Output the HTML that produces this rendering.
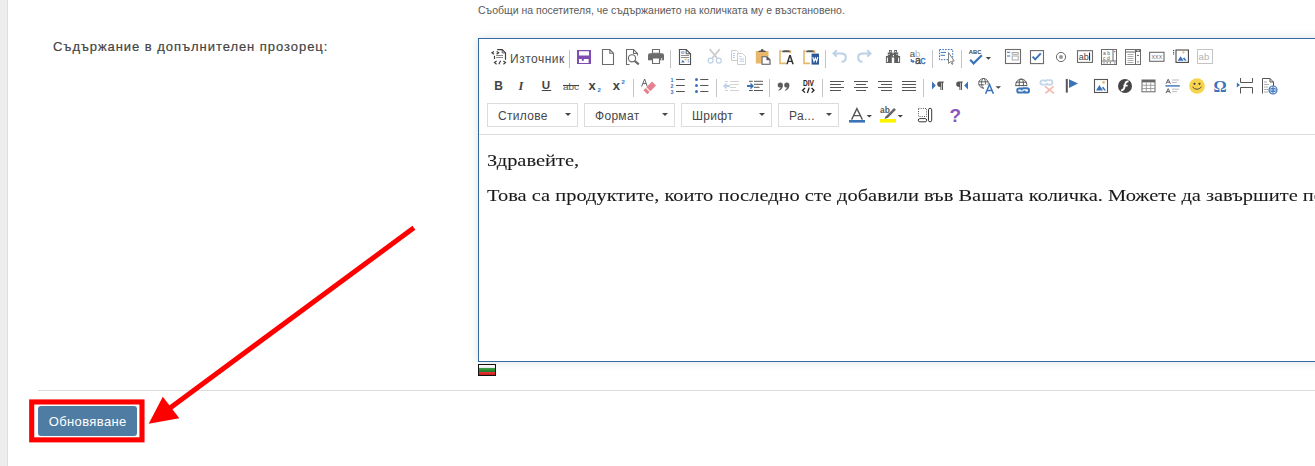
<!DOCTYPE html>
<html><head><meta charset="utf-8">
<style>
html,body{margin:0;padding:0}
body{width:1315px;height:466px;overflow:hidden;position:relative;background:#fff;font-family:"Liberation Sans",sans-serif}
.lbar{position:absolute;left:0;top:0;width:7px;height:466px;background:#ededed;border-right:1px solid #dedede}
.lbl{position:absolute;left:53px;top:39px;font-size:13px;font-weight:normal;color:#444;-webkit-text-stroke:0.2px #444;letter-spacing:0.95px;white-space:nowrap}
.desc{position:absolute;left:478px;top:4px;font-size:10.5px;color:#5a5a5a;white-space:nowrap}
.ed{position:absolute;left:478px;top:38px;width:900px;height:322px;border:1px solid #336b9e;box-shadow:0 0 9px rgba(20,40,70,0.15);background:#fff}
.ic{position:absolute;overflow:visible}
.sep{position:absolute;width:1px;background:#c4c4c4}
.srclbl{position:absolute;left:510px;top:52px;font-size:12px;color:#4a4a4a;white-space:nowrap;letter-spacing:0.5px}
.combo{position:absolute;top:103px;height:22px;border:1px solid #dcdcdc;background:#fff}
.combo span{position:absolute;left:10px;top:5px;font-size:12px;color:#474747;white-space:nowrap;letter-spacing:0.3px}
.combo i{position:absolute;right:6px;top:9px;width:0;height:0;border-left:3px solid transparent;border-right:3px solid transparent;border-top:3px solid #474747}
.tbline{position:absolute;left:479px;top:134px;width:836px;height:1px;background:#dedede}
.content{position:absolute;left:487px;top:150px;transform:scaleX(1.168);transform-origin:0 0;font-family:"Liberation Serif",serif;font-size:17.5px;color:#1a1a1a;white-space:nowrap;-webkit-text-stroke:0.08px #222}
.content p{margin:0;position:absolute;left:0}
.flag{position:absolute;left:478px;top:364px;width:16px;height:10px;border:1px solid #111;background:linear-gradient(#fff 0,#e6e6e6 33%,#3aa043 33%,#217a2a 66%,#f03a3a 66%,#c81c1c 100%)}
.hr{position:absolute;left:38px;top:390px;width:1277px;height:1px;background:#dcdcdc}
.btn{position:absolute;left:38px;top:406px;width:99px;height:30px;background:#4f7ca3;border-radius:3px;color:#fff;font-size:13px;text-align:center;line-height:32px;letter-spacing:0.38px;text-indent:0.4px}
.redbox{position:absolute;left:29px;top:399px;width:105px;height:33px;border:5px solid #f00}
</style></head><body>
<div class="lbar"></div>
<div class="lbl">Съдържание в допълнителен прозорец:</div>
<div class="desc">Съобщи на посетителя, че съдържанието на количката му е възстановено.</div>
<div class="ed"></div>
<div class="srclbl">Източник</div>
<div class="sep" style="left:569px;top:50px;height:18px"></div>
<div class="sep" style="left:670px;top:50px;height:18px"></div>
<div class="sep" style="left:825px;top:50px;height:18px"></div>
<div class="sep" style="left:932px;top:50px;height:18px"></div>
<div class="sep" style="left:961px;top:50px;height:18px"></div>
<div class="sep" style="left:633px;top:79px;height:18px"></div>
<div class="sep" style="left:716px;top:79px;height:18px"></div>
<div class="sep" style="left:769px;top:79px;height:18px"></div>
<div class="sep" style="left:822px;top:79px;height:18px"></div>
<div class="sep" style="left:923px;top:79px;height:18px"></div>
<div class="combo" style="left:487px;width:89px"><span>Стилове</span><i></i></div>
<div class="combo" style="left:584px;width:89px"><span>Формат</span><i></i></div>
<div class="combo" style="left:681px;width:89px"><span>Шрифт</span><i></i></div>
<div class="combo" style="left:778px;width:59px"><span>Ра...</span><i></i></div>
<div class="tbline"></div>
<svg class="ic" style="left:491px;top:49px;width:16px;height:16px" viewBox="0 0 16 16"><g fill="none" stroke="#3c3c3c" stroke-width="1.15">
<path d="M3 2.4 L0.9 3.8 L3 5.2"/><path d="M5.6 2.4 L7.7 3.8 L5.6 5.2"/>
<path d="M6.2 0.6 H11.2 L14.5 3.9 V10.8"/><path d="M11.2 0.6 V3.9 H14.5" stroke-width="0.8"/>
<path d="M3.5 6.8 V10"/>
<path d="M5.2 6.5 H12 M5.2 8.5 H12" stroke="#8a8a8a"/>
<path d="M5.6 12 L3.5 13.6 L5.6 15.2"/><path d="M12.4 12 L14.5 13.6 L12.4 15.2"/><path d="M9.6 11.8 L7.9 15.3"/>
</g></svg>
<svg class="ic" style="left:576px;top:49px;width:16px;height:16px" viewBox="0 0 16 16"><path fill="#7f4db0" d="M1 1 H15 V15 H1Z"/><path fill="#fff" d="M3 2.2 H13 V6.6 H3Z M3 10 H12.6 V14 H3Z"/><path fill="#7f4db0" d="M5.8 10 H7.8 V11.8 H5.8Z"/></svg>
<svg class="ic" style="left:600px;top:49px;width:16px;height:16px" viewBox="0 0 16 16"><path fill="none" stroke="#6b6b6b" stroke-width="1.1" d="M2.5 0.5 H9.8 L13.5 4.2 V15.5 H2.5Z M9.8 0.5 V4.2 H13.5"/></svg>
<svg class="ic" style="left:624px;top:49px;width:16px;height:16px" viewBox="0 0 16 16"><g fill="none" stroke="#6b6b6b" stroke-width="1.1"><path d="M5.5 15.5 H2.5 V0.5 H9.5 L13.5 4.5 V6.5"/><path d="M9.5 0.5 V4.5 H13.5"/><circle cx="8" cy="9.3" r="3.6"/></g><path stroke="#6b6b6b" stroke-width="2.1" d="M10.6 11.9 L14.8 15.4"/></svg>
<svg class="ic" style="left:648px;top:49px;width:16px;height:16px" viewBox="0 0 16 16"><g fill="#6b6b6b"><path d="M0 6.2 Q0 4.2 2 4.2 H14 Q16 4.2 16 6.2 V11.2 H0Z"/></g><path fill="#fff" stroke="#6b6b6b" stroke-width="1.1" d="M4.5 0.5 H11.5 V4.2 H4.5Z M4.5 9 H11.5 V14.5 H4.5Z"/><circle cx="13.6" cy="10" r="0.8" fill="#fff"/></svg>
<svg class="ic" style="left:677px;top:49px;width:16px;height:16px" viewBox="0 0 16 16"><path fill="none" stroke="#505050" stroke-width="1.15" d="M2.5 0.5 H9.2 L13.5 4.8 V15.5 H2.5Z"/><path fill="none" stroke="#505050" stroke-width="1" d="M9.2 0.5 V4.8 H13.5"/>
<rect x="4" y="2" width="3.6" height="3" fill="#a9c1de"/><path stroke="#8f8f8f" stroke-width="1" d="M4 6.5 H12 M4 8.5 H12"/>
<path fill="#3b73b9" d="M4 13.4 L5.8 11 L7.8 13.4Z"/><circle cx="8.6" cy="10.6" r="1" fill="#e9b76c"/><rect x="10.6" y="10" width="1.4" height="3.6" fill="#a9c1de"/></svg>
<svg class="ic" style="left:707px;top:49px;width:16px;height:16px" viewBox="0 0 16 16"><path stroke="#cdcdcd" stroke-width="1.9" fill="none" d="M2.6 0.2 L10 9 M12.8 0.2 L5.4 9"/><g fill="none" stroke="#bcd0e6" stroke-width="1.2"><circle cx="3.6" cy="11.6" r="2.5"/><circle cx="11.8" cy="11.6" r="2.5"/></g></svg>
<svg class="ic" style="left:731px;top:49px;width:16px;height:16px" viewBox="0 0 16 16"><g fill="#fff" stroke="#cdcdcd" stroke-width="1"><path d="M0.5 1.5 H5.5 L7.5 3.5 V11.5 H0.5Z"/><path d="M6.5 4.5 H11.5 L14.5 7.5 V15.5 H6.5Z"/></g><path stroke="#b6cbe2" stroke-width="1" d="M2 4.5 H4 M2 6.5 H4 M2 8.5 H4 M8.5 7.5 H10.5 M8.5 10 H13 M8.5 12.2 H13"/></svg>
<svg class="ic" style="left:755px;top:49px;width:16px;height:16px" viewBox="0 0 16 16"><path fill="#e9b76c" d="M0.8 2 H13.5 V7.5 H6.5 V14.5 H0.8Z"/><path fill="#fff" d="M2.3 3.5 H12 V7.5 H6.5 V13 H2.3Z" opacity="0"/><path fill="#555" d="M3.2 3 Q3.2 1.4 5 1.4 H5.8 Q6 0 7.2 0 Q8.4 0 8.6 1.4 H9.4 Q11 1.4 11 3Z"/><path fill="#fff" stroke="#555" stroke-width="1.1" d="M7 7.8 H12 L15 10.8 V15.2 H7Z M12 7.8 V10.8 H15"/></svg>
<svg class="ic" style="left:779px;top:49px;width:16px;height:16px" viewBox="0 0 16 16"><path fill="none" stroke="#e9b76c" stroke-width="1.6" d="M3 2 H1 V14.4 H7 M9.3 2 H11.5 V4"/><path fill="#555" d="M3 3.2 Q3 1.3 5 1.3 H9 Q11 1.3 11 3.2Z"/><path fill="#333" d="M7.2 15.3 L10.2 6 H11.8 L14.8 15.3 H13.2 L12.5 13 H9.5 L8.8 15.3Z M9.9 11.8 H12.1 L11 8.2Z"/></svg>
<svg class="ic" style="left:803px;top:49px;width:16px;height:16px" viewBox="0 0 16 16"><path fill="none" stroke="#e9b76c" stroke-width="1.6" d="M3 2 H1 V14.4 H7 M9.3 2 H11.5 V4"/><path fill="#555" d="M3 3.2 Q3 1.3 5 1.3 H9 Q11 1.3 11 3.2Z"/><path fill="#2b5797" d="M8.6 4.6 H16 V15.6 H8.6Z"/><path fill="none" stroke="#fff" stroke-width="1.1" d="M9.8 8 L11 12.4 L12.3 9 L13.6 12.4 L14.8 8"/></svg>
<svg class="ic" style="left:832px;top:49px;width:16px;height:16px" viewBox="0 0 16 16"><path fill="none" stroke="#bcd0e6" stroke-width="2" d="M4.8 1.2 L1.5 4.4 L4.8 7.6 M1.5 4.4 H9.5 Q13.8 4.4 13.8 8.4 Q13.8 12.6 9.5 12.8"/></svg>
<svg class="ic" style="left:856px;top:49px;width:16px;height:16px" viewBox="0 0 16 16"><path fill="none" stroke="#bcd0e6" stroke-width="2" d="M11.2 1.2 L14.5 4.4 L11.2 7.6 M14.5 4.4 H6.5 Q2.2 4.4 2.2 8.4 Q2.2 12.6 6.5 12.8"/></svg>
<svg class="ic" style="left:885px;top:49px;width:16px;height:16px" viewBox="0 0 16 16"><g fill="#5f5f5f"><rect x="4" y="1" width="2.8" height="2.6"/><rect x="2.8" y="3.5" width="4.9" height="3.6"/><rect x="0.9" y="7" width="5.9" height="7"/><rect x="6.7" y="5" width="3.4" height="3.5"/><rect x="9.2" y="1" width="2.8" height="2.6"/><rect x="8.3" y="3.5" width="4.9" height="3.6"/><rect x="9.2" y="7" width="5.9" height="7"/></g><g fill="#fff"><rect x="1.9" y="8.6" width="1" height="4.4"/><rect x="13.1" y="8.6" width="1" height="4.4"/><circle cx="5.3" cy="2.4" r="0.6"/><circle cx="10.7" cy="2.4" r="0.6"/><circle cx="4" cy="5.3" r="0.6"/><circle cx="12" cy="5.3" r="0.6"/><circle cx="8.4" cy="6.8" r="0.7"/></g></svg>
<svg class="ic" style="left:909px;top:49px;width:16px;height:16px" viewBox="0 0 16 16"><text x="0.7" y="7.5" font-family="Liberation Sans" font-size="9.6" font-weight="normal" font-style="normal" fill="#4a4a4a" >a</text><text x="6" y="7.5" font-family="Liberation Sans" font-size="9.6" font-weight="normal" font-style="normal" fill="#b9b9b9" >b</text><path fill="none" stroke="#3b73b9" stroke-width="1.1" d="M2.3 10 V12.4 H4.9 M3.6 11.2 L4.9 12.4 L3.6 13.6"/><text x="5.9" y="14.6" font-family="Liberation Sans" font-size="10.4" font-weight="normal" font-style="normal" fill="#3f3f3f" stroke="#3f3f3f" stroke-width="0.35">a</text><text x="11.3" y="14.6" font-family="Liberation Sans" font-size="10.4" font-weight="normal" font-style="normal" fill="#3b73b9" stroke="#3b73b9" stroke-width="0.35">c</text></svg>
<svg class="ic" style="left:938px;top:49px;width:16px;height:16px" viewBox="0 0 16 16"><rect x="1.5" y="0.5" width="13.2" height="10.2" fill="none" stroke="#3b73b9" stroke-width="1" stroke-dasharray="1.6 1.2"/><path stroke="#3b73b9" stroke-width="1" d="M2.6 3.4 H8 M2.6 6.3 H7"/><path fill="#fff" stroke="#777" stroke-width="0.9" d="M10.5 3.5 V14.5 L12.6 12.5 L14 15.4 L15 14.9 L13.8 12 H16.2Z"/></svg>
<svg class="ic" style="left:968px;top:49px;width:24px;height:16px" viewBox="0 0 24 16"><text x="0.8" y="4.8" font-family="Liberation Sans" font-size="5.6" font-weight="bold" fill="#444" textLength="12.6" lengthAdjust="spacingAndGlyphs">ABC</text><path fill="none" stroke="#3b73b9" stroke-width="2.2" d="M2.2 10.8 L5.6 14.4 L13.8 6.2"/><path fill="#444" d="M17.8 8 H23 L20.4 10.8Z"/></svg>
<svg class="ic" style="left:1005px;top:49px;width:16px;height:16px" viewBox="0 0 16 16"><rect x="0.5" y="0.5" width="15" height="14" fill="none" stroke="#6b6b6b" stroke-width="1.1"/><path stroke="#3b73b9" stroke-width="1" d="M2 3.3 H5.2 M2 7 H5.2"/><g fill="none" stroke="#aaa" stroke-width="1"><rect x="7.2" y="3.5" width="6" height="1.8"/><rect x="7.2" y="7" width="6" height="4"/></g></svg>
<svg class="ic" style="left:1029px;top:49px;width:16px;height:16px" viewBox="0 0 16 16"><rect x="1.5" y="1.6" width="13" height="13" fill="none" stroke="#6b6b6b" stroke-width="1.1"/><path fill="none" stroke="#3b73b9" stroke-width="2" d="M3.6 7.6 L6.2 10.4 L11.8 4.4"/></svg>
<svg class="ic" style="left:1053px;top:49px;width:16px;height:16px" viewBox="0 0 16 16"><circle cx="8" cy="8" r="4.6" fill="none" stroke="#6b6b6b" stroke-width="1"/><circle cx="8" cy="8" r="2" fill="#999"/></svg>
<svg class="ic" style="left:1077px;top:49px;width:16px;height:16px" viewBox="0 0 16 16"><rect x="0.5" y="1.7" width="15" height="11.7" fill="none" stroke="#6b6b6b" stroke-width="1.1"/><text x="1.8" y="10.8" font-family="Liberation Sans" font-size="9" fill="#444">ab</text><path stroke="#111" stroke-width="1" d="M12.6 3.6 V11.6"/></svg>
<svg class="ic" style="left:1101px;top:49px;width:16px;height:16px" viewBox="0 0 16 16"><rect x="0.5" y="0.5" width="15" height="15" fill="none" stroke="#6b6b6b" stroke-width="1"/><path stroke="#6b6b6b" stroke-width="1" d="M12 0.5 V12 M0.5 12 H15.5"/><text x="2" y="5.6" font-family="Liberation Sans" font-size="5" fill="#555">a b</text><text x="2" y="10.6" font-family="Liberation Sans" font-size="5" fill="#555">c d</text><g fill="#666"><rect x="13.2" y="2" width="1.2" height="1.2"/><rect x="2.4" y="13.3" width="1.2" height="1.2"/><rect x="5.6" y="13.3" width="1.2" height="1.2"/><rect x="8.8" y="13.3" width="1.2" height="1.2"/><rect x="13.2" y="13.3" width="1.2" height="1.2"/></g></svg>
<svg class="ic" style="left:1125px;top:49px;width:16px;height:16px" viewBox="0 0 16 16"><rect x="0.5" y="0.5" width="15" height="15" fill="none" stroke="#6b6b6b" stroke-width="1"/><path fill="#6b6b6b" d="M10 0.5 H15.5 V3 H10Z"/><path stroke="#6b6b6b" stroke-width="1" d="M10.5 0.5 V15.5 M0.5 3 H10.5"/><path fill="#fff" d="M11.6 1.2 H14.4 L13 2.6Z"/><path stroke="#999" stroke-width="0.8" d="M2.5 5.5 H8.5 M2.5 7.5 H8.5 M2.5 9.5 H8.5 M2.5 11.5 H8.5 M2.5 13.5 H8.5"/><path fill="#555" d="M11.8 7 H14.2 L13 5.6Z M11.8 12.4 H14.2 L13 13.8Z"/></svg>
<svg class="ic" style="left:1149px;top:49px;width:16px;height:16px" viewBox="0 0 16 16"><rect x="0.6" y="3.3" width="14.4" height="9" fill="none" stroke="#6b6b6b" stroke-width="1.1"/><text x="2.6" y="10" font-family="Liberation Sans" font-size="5.4" fill="#666" textLength="10.6" lengthAdjust="spacingAndGlyphs">XXX</text></svg>
<svg class="ic" style="left:1173px;top:49px;width:16px;height:16px" viewBox="0 0 16 16"><path stroke="#444" stroke-width="1" d="M0 1.5 H1.2 M0 3.3 H1.2 M0 5 H1.2"/><rect x="3" y="1" width="12.4" height="12.4" fill="none" stroke="#474747" stroke-width="1.1"/><circle cx="10.4" cy="3.4" r="1.1" fill="#e9b76c"/><path fill="#3b73b9" d="M4.6 11.8 L7.6 7.3 L10.6 11.8Z M9.6 9.4 L11.4 8.6 L13.6 11.8 H12Z"/></svg>
<svg class="ic" style="left:1197px;top:49px;width:16px;height:16px" viewBox="0 0 16 16"><rect x="0.5" y="0.5" width="15" height="14" fill="none" stroke="#c4c4c4" stroke-width="1"/><text x="1.6" y="11.2" font-family="Liberation Sans" font-size="9.5" fill="#b4b4b4">ab</text></svg>
<svg class="ic" style="left:491px;top:78px;width:16px;height:16px" viewBox="0 0 16 16"><text x="3.3" y="12" font-family="Liberation Sans" font-size="12" font-weight="bold" font-style="normal" fill="#444" >B</text></svg>
<svg class="ic" style="left:515px;top:78px;width:16px;height:16px" viewBox="0 0 16 16"><text x="3.4" y="12" font-family="Liberation Serif" font-size="12.4" font-weight="bold" font-style="italic" fill="#444" >I</text></svg>
<svg class="ic" style="left:539px;top:78px;width:16px;height:16px" viewBox="0 0 16 16"><text x="2.8" y="10.7" font-family="Liberation Sans" font-size="11.6" font-weight="bold" font-style="normal" fill="#444" >U</text><path stroke="#444" stroke-width="1" d="M2.8 12.5 H12.2"/></svg>
<svg class="ic" style="left:563px;top:78px;width:16px;height:16px" viewBox="0 0 16 16"><text x="0" y="11.9" font-family="Liberation Sans" font-size="9.8" font-weight="normal" font-style="normal" fill="#555" textLength="16" lengthAdjust="spacingAndGlyphs">abc</text><path stroke="#444" stroke-width="1" d="M0 7.5 H16"/></svg>
<svg class="ic" style="left:587px;top:78px;width:16px;height:16px" viewBox="0 0 16 16"><text x="1.6" y="12" font-family="Liberation Sans" font-size="13" font-weight="bold" font-style="normal" fill="#444" >x</text><text x="10.6" y="14.2" font-family="Liberation Sans" font-size="6" font-weight="bold" font-style="normal" fill="#3b73b9" >2</text></svg>
<svg class="ic" style="left:611px;top:78px;width:16px;height:16px" viewBox="0 0 16 16"><text x="1.8" y="12" font-family="Liberation Sans" font-size="13" font-weight="bold" font-style="normal" fill="#444" >x</text><text x="10.6" y="6.2" font-family="Liberation Sans" font-size="6" font-weight="bold" font-style="normal" fill="#3b73b9" >2</text></svg>
<svg class="ic" style="left:640px;top:78px;width:16px;height:16px" viewBox="0 0 16 16"><path fill="none" stroke="#555" stroke-width="0.9" d="M1.6 8.6 L4.6 1 L7.3 8.6 M2.9 5.6 H6.2"/><path fill="#e6808f" d="M6.4 9.2 L12 3.6 L16 7.6 L10.4 13.2Z"/><path fill="#e6808f" d="M3.4 12.2 L5.6 10 L9.6 14 L7.4 16.2Z"/></svg>
<svg class="ic" style="left:670px;top:78px;width:16px;height:16px" viewBox="0 0 16 16"><text x="0.4" y="3.9" font-family="Liberation Sans" font-size="5.4" font-weight="bold" font-style="normal" fill="#3b73b9" >1</text><text x="0.4" y="9.9" font-family="Liberation Sans" font-size="5.4" font-weight="bold" font-style="normal" fill="#3b73b9" >2</text><text x="0.4" y="15.9" font-family="Liberation Sans" font-size="5.4" font-weight="bold" font-style="normal" fill="#3b73b9" >3</text><path stroke="#555" stroke-width="1" d="M6 1.5 H14.8 M6 7.5 H14.8 M6 13.5 H14.8"/></svg>
<svg class="ic" style="left:694px;top:78px;width:16px;height:16px" viewBox="0 0 16 16"><g fill="#3b73b9"><circle cx="2.5" cy="1.5" r="1.5"/><circle cx="2.5" cy="7.5" r="1.5"/><circle cx="2.5" cy="13.5" r="1.5"/></g><path stroke="#555" stroke-width="1" d="M6.2 1.5 H14.4 M6.2 7.5 H14.4 M6.2 13.5 H14.4"/></svg>
<svg class="ic" style="left:723px;top:78px;width:16px;height:16px" viewBox="0 0 16 16"><path stroke="#d3d3d3" stroke-width="1" d="M2 3.5 H5 M7 3.5 H16 M7 6.5 H16 M7 9.5 H13 M2 12.5 H5 M7 12.5 H16"/><path fill="#bcd0e6" d="M0 8 L3.5 4.6 V7 H7 V9 H3.5 V11.4Z"/></svg>
<svg class="ic" style="left:747px;top:78px;width:16px;height:16px" viewBox="0 0 16 16"><path stroke="#555" stroke-width="1" d="M2 3.3 H5.8 M7 3.3 H16 M7 6.3 H16 M7 9.3 H12.5 M2 12.5 H5.8 M7 12.5 H16"/><path fill="#3b73b9" d="M7 8 L3.5 4.6 V7 H0 V9 H3.5 V11.4Z"/></svg>
<svg class="ic" style="left:776px;top:78px;width:16px;height:16px" viewBox="0 0 16 16"><g fill="#5c5c5c"><circle cx="4.3" cy="7" r="2.6"/><path d="M6.8 7.4 Q6.6 11.6 2.6 12.8 L2.4 12.2 Q5 10.8 5 8Z"/><circle cx="10.8" cy="7" r="2.6"/><path d="M13.3 7.4 Q13.1 11.6 9.1 12.8 L8.9 12.2 Q11.5 10.8 11.5 8Z"/></g></svg>
<svg class="ic" style="left:800px;top:78px;width:16px;height:16px" viewBox="0 0 16 16"><text x="3" y="7.6" font-family="Liberation Sans" font-size="9" font-weight="bold" font-style="normal" fill="#222" textLength="11" lengthAdjust="spacingAndGlyphs">DIV</text><path fill="none" stroke="#222" stroke-width="1.3" d="M5 10 L2.6 12.3 L5 14.6 M11.6 10 L14 12.3 L11.6 14.6 M9.2 9.6 L7.4 15"/></svg>
<svg class="ic" style="left:829px;top:78px;width:16px;height:16px" viewBox="0 0 16 16"><path stroke="#555" stroke-width="1" d="M1 3.5 H15"/><path stroke="#555" stroke-width="1" d="M1 6.5 H12"/><path stroke="#555" stroke-width="1" d="M1 9.5 H15"/><path stroke="#555" stroke-width="1" d="M1 12.5 H12"/></svg>
<svg class="ic" style="left:853px;top:78px;width:16px;height:16px" viewBox="0 0 16 16"><path stroke="#555" stroke-width="1" d="M1 3.5 H15"/><path stroke="#555" stroke-width="1" d="M3 6.5 H13"/><path stroke="#555" stroke-width="1" d="M1 9.5 H15"/><path stroke="#555" stroke-width="1" d="M3 12.5 H13"/></svg>
<svg class="ic" style="left:877px;top:78px;width:16px;height:16px" viewBox="0 0 16 16"><path stroke="#555" stroke-width="1" d="M1 3.5 H15"/><path stroke="#555" stroke-width="1" d="M4 6.5 H15"/><path stroke="#555" stroke-width="1" d="M1 9.5 H15"/><path stroke="#555" stroke-width="1" d="M4 12.5 H15"/></svg>
<svg class="ic" style="left:901px;top:78px;width:16px;height:16px" viewBox="0 0 16 16"><path stroke="#555" stroke-width="1" d="M1 3.5 H15"/><path stroke="#555" stroke-width="1" d="M1 6.5 H15"/><path stroke="#555" stroke-width="1" d="M1 9.5 H15"/><path stroke="#555" stroke-width="1" d="M1 12.5 H15"/></svg>
<svg class="ic" style="left:930px;top:78px;width:16px;height:16px" viewBox="0 0 16 16"><path fill="#3b73b9" d="M2 3.6 L5.8 7.6 L2 11.6Z"/><path fill="#555" d="M9.4 3.6 H13.7 V4.8 H13.0 V12 H12.0 V4.8 H11.4 V12 H10.4 V9 Q7.2 9 7.2 6.3 Q7.2 3.6 9.4 3.6Z"/></svg>
<svg class="ic" style="left:954px;top:78px;width:16px;height:16px" viewBox="0 0 16 16"><path fill="#555" d="M4.4 3.6 H8.7 V4.8 H8.0 V12 H7.0 V4.8 H6.4 V12 H5.4 V9 Q2.2 9 2.2 6.3 Q2.2 3.6 4.4 3.6Z"/><path fill="#3b73b9" d="M14 3.6 L10.2 7.6 L14 11.6Z"/></svg>
<svg class="ic" style="left:977px;top:78px;width:25px;height:16px" viewBox="0 0 25 16"><g fill="none" stroke="#555" stroke-width="0.9"><circle cx="6.5" cy="5.3" r="4.8"/><ellipse cx="6.5" cy="5.3" rx="2" ry="4.8"/><path d="M1.7 3.8 H11.3 M1.7 6.8 H11.3"/></g><rect x="7" y="6.4" width="10" height="10" fill="#fff"/><path fill="none" stroke="#3b73b9" stroke-width="1.5" d="M8.6 15.8 L12.5 6.4 L16.4 15.8 M10 12.6 H15"/><path fill="#444" d="M18.6 8.2 H24 L21.3 10.8Z"/></svg>
<svg class="ic" style="left:1015px;top:78px;width:16px;height:16px" viewBox="0 0 16 16"><g fill="none" stroke="#555" stroke-width="1"><path d="M0.8 8.2 V6.6 A5.5 5.5 0 0 1 11.8 6.6 V8.2"/><path d="M4.2 8.2 V6 Q4.2 1 6.3 1 Q8.4 1 8.4 6 V8.2"/><path d="M1 4.2 H11.6 M0.8 7.6 H11.8"/></g><g fill="none" stroke="#3b73b9" stroke-width="2"><path d="M7.2 10.4 H4.2 Q2.2 10.4 2.2 12.4 Q2.2 14.6 4.2 14.6 H7.6 Q9.6 14.6 9.6 12.6"/><path d="M8.8 14.6 H12 Q14 14.6 14 12.4 Q14 10.2 12 10.2 H8.6 Q6.6 10.2 6.6 12.2"/></g></svg>
<svg class="ic" style="left:1039px;top:78px;width:16px;height:16px" viewBox="0 0 16 16"><g fill="none" stroke="#c3d6ea" stroke-width="1.8"><path d="M6 2.4 H3.4 Q1.4 2.4 1.4 4.4 Q1.4 6.6 3.4 6.6 H6.6 Q8.4 6.6 8.4 4.8"/><path d="M7.8 6.6 H11.4 Q13.4 6.6 13.4 4.4 Q13.4 2.2 11.4 2.2 H8.2 Q6.4 2.2 6.4 4"/></g><path stroke="#f2bbb3" stroke-width="1.8" d="M6 8.4 L15 15.4 M14.6 8.4 L6.4 15.4"/></svg>
<svg class="ic" style="left:1064px;top:78px;width:16px;height:16px" viewBox="0 0 16 16"><path fill="#555" d="M1.8 1 H3.8 V14.6 H1.8Z"/><path fill="#3b73b9" d="M5 1.2 L14 5.6 L5 10Z"/></svg>
<svg class="ic" style="left:1093px;top:78px;width:16px;height:16px" viewBox="0 0 16 16"><rect x="1.5" y="1.5" width="13" height="13" fill="none" stroke="#555" stroke-width="1.1"/><circle cx="10.6" cy="4.4" r="1.3" fill="#e9b76c"/><path fill="#3b73b9" d="M3 12.6 L6.4 7 L10 12.6Z M8.8 9.8 L10.4 8.8 L13 12.6 H11.4Z"/></svg>
<svg class="ic" style="left:1117px;top:78px;width:16px;height:16px" viewBox="0 0 16 16"><circle cx="8" cy="8" r="7" fill="#454545"/><path fill="none" stroke="#fff" stroke-width="1.8" d="M11.6 3.4 Q9 3 8.2 6 L7.4 9.6 Q6.6 12.6 4 12.4 M6.4 7.6 H10.6"/></svg>
<svg class="ic" style="left:1141px;top:78px;width:16px;height:16px" viewBox="0 0 16 16"><rect x="1" y="2" width="13" height="11.8" fill="none" stroke="#666" stroke-width="1"/><rect x="1" y="2" width="13" height="2.4" fill="#666"/><path stroke="#999" stroke-width="0.9" d="M1 7.3 H14 M1 10.5 H14 M5.3 4.4 V13.8 M9.7 4.4 V13.8"/></svg>
<svg class="ic" style="left:1165px;top:78px;width:16px;height:16px" viewBox="0 0 16 16"><path fill="none" stroke="#555" stroke-width="0.9" d="M1 5.8 L3.2 1.2 L5.4 5.8 M1.8 4.2 H4.6"/><path fill="none" stroke="#555" stroke-width="0.9" d="M1 15.2 L3.2 10.6 L5.4 15.2 M1.8 13.6 H4.6"/><path stroke="#3b73b9" stroke-width="1.4" d="M0.4 7.9 H14.8"/><path stroke="#aaa" stroke-width="0.8" d="M7 2 H14 M7 4.4 H12 M7 11.2 H14 M7 13.6 H12"/></svg>
<svg class="ic" style="left:1189px;top:78px;width:16px;height:16px" viewBox="0 0 16 16"><circle cx="8" cy="8" r="7.8" fill="#f7d44c"/><circle cx="5.5" cy="5.8" r="1.1" fill="#444"/><circle cx="10.5" cy="5.8" r="1.1" fill="#444"/><path fill="none" stroke="#444" stroke-width="0.9" d="M3.4 8.8 Q8 13.8 12.6 8.8"/></svg>
<svg class="ic" style="left:1213px;top:78px;width:16px;height:16px" viewBox="0 0 16 16"><text x="0.6" y="14" font-family="Liberation Serif" font-size="16.4" font-weight="bold" font-style="normal" fill="#3b73b9" >Ω</text></svg>
<svg class="ic" style="left:1237px;top:78px;width:16px;height:16px" viewBox="0 0 16 16"><g fill="none" stroke="#555" stroke-width="1"><path d="M3.5 0 V4.5 H15.5 V0"/><path d="M3.5 15.5 V9.5 H15.5 V15.5"/></g><path fill="#3b73b9" d="M-0.2 4.4 L3 7 L-0.2 9.6Z"/></svg>
<svg class="ic" style="left:1261px;top:78px;width:16px;height:16px" viewBox="0 0 16 16"><path fill="none" stroke="#555" stroke-width="1" d="M1.5 15.5 V0.5 H9 L12.5 4 V8"/><path fill="none" stroke="#555" stroke-width="1" d="M9 0.5 V4 H12.5"/><path stroke="#999" stroke-width="0.8" d="M3 4 H6 M3 6.5 H8 M3 9 H7 M3 11.5 H7 M3 14 H7"/><circle cx="12" cy="12" r="4" fill="#fff" stroke="#3b73b9" stroke-width="1.2"/><path stroke="#3b73b9" stroke-width="1" d="M8.4 12 H15.6 M12 8.2 V15.8 M9.4 10.4 H14.6 M9.4 13.6 H14.6"/></svg>
<svg class="ic" style="left:849px;top:107px;width:24px;height:16px" viewBox="0 0 24 16"><path fill="none" stroke="#555" stroke-width="1.35" d="M2.6 12.6 L7.9 1.6 L13.4 12.6 M4.6 8.6 H11.4"/><rect x="0" y="13" width="16" height="2.6" fill="#3b73b9"/><path fill="#444" d="M17.6 8 H23 L20.3 10.6Z"/></svg>
<svg class="ic" style="left:880px;top:107px;width:24px;height:16px" viewBox="0 0 24 16"><text x="0" y="6.4" font-family="Liberation Sans" font-size="8.4" font-weight="bold" font-style="normal" fill="#5a5a5a" >ab</text><path stroke="#666" stroke-width="2.6" d="M6.6 10.4 L15 1.8"/><path fill="#555" d="M4.6 12 L5.8 9 L7.6 10.8Z"/><rect x="0" y="12" width="16" height="3.6" fill="#fdf500"/><path fill="#444" d="M17.6 8 H23 L20.3 10.6Z"/></svg>
<svg class="ic" style="left:917px;top:107px;width:16px;height:16px" viewBox="0 0 16 16"><rect x="1.5" y="1.5" width="8" height="8" fill="none" stroke="#333" stroke-width="0.9" stroke-dasharray="0.9 1.3"/><rect x="1.3" y="11.6" width="8.4" height="3.2" rx="1.6" fill="none" stroke="#222" stroke-width="0.9"/><rect x="11.5" y="1.3" width="3.2" height="13.5" rx="1.6" fill="none" stroke="#222" stroke-width="0.9"/></svg>
<svg class="ic" style="left:947px;top:107px;width:16px;height:16px" viewBox="0 0 16 16"><text x="2.4" y="14.9" font-family="Liberation Sans" font-size="19" font-weight="bold" font-style="normal" fill="#8a55bd" >?</text></svg>
<div class="content"><p style="top:0">Здравейте,</p><p style="top:35px">Това са продуктите, които последно сте добавили във Вашата количка. Можете да завършите поръчката си.</p></div>
<div class="flag"></div>
<div class="hr"></div>
<div class="btn">Обновяване</div>
<svg style="position:absolute;left:0;top:0" width="1315" height="466"><rect x="31.7" y="401.95" width="110.3" height="37.9" fill="none" stroke="#f00" stroke-width="5.1"/><line x1="413.9" y1="227.8" x2="168" y2="409.5" stroke="#f00" stroke-width="5"/><polygon points="148.7,423.8 162.8,396.7 179.3,418.3" fill="#f00"/></svg>
</body></html>
